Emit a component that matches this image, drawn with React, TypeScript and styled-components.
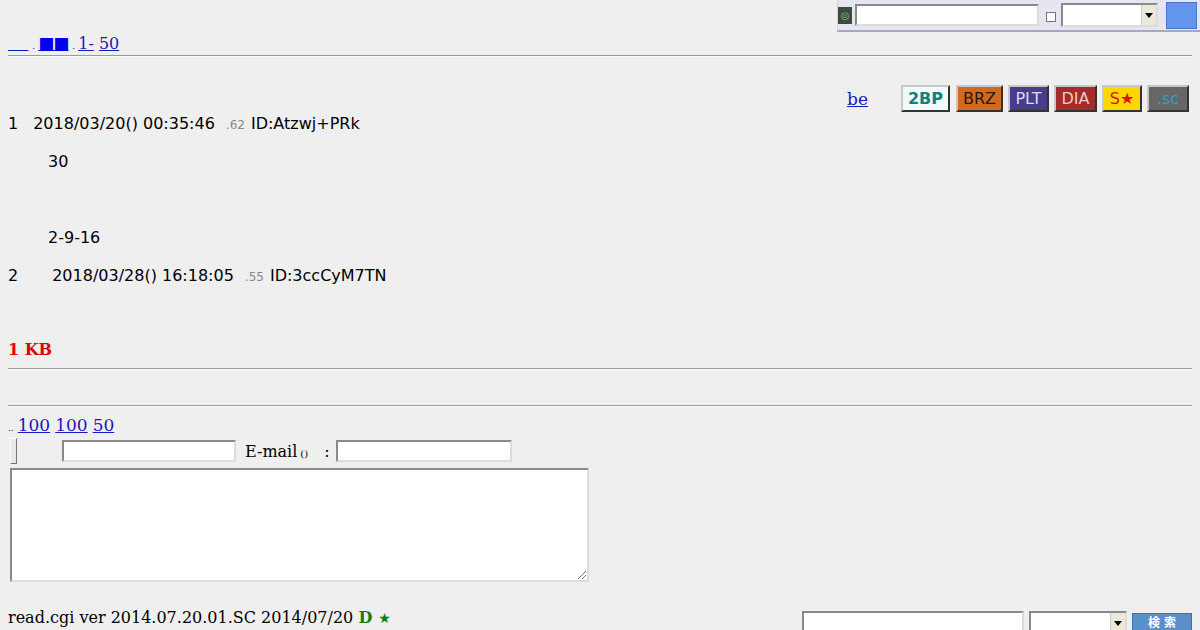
import { createGlobalStyle, styled } from "styled-components";

const Global = createGlobalStyle`
  html, body {
    background: #efefef;
  }
  body {
    margin: 8px;
    font-family: "DejaVu Serif", serif;
    font-size: 16px;
    color: #000;
  }
`;

const Page = styled.div`
  display: flex;
  flex-direction: column;
`;

const SearchBar = styled.form`
  position: fixed;
  top: 0;
  right: 0;
  width: 363px;
  height: 32px;
  background: #e6e6f3;
  border-left: 1px solid #d0d0e0;
  border-bottom: 2px solid #a8a8c4;
  display: flex;
  align-items: center;
  gap: 3px;
  box-sizing: border-box;
`;

const Emblem = styled.span`
  width: 14px;
  height: 17px;
  background: #3f4a3f;
  color: #7ec07e;
  font-size: 10px;
  font-family: "DejaVu Sans", sans-serif;
  display: flex;
  align-items: center;
  justify-content: center;
`;

const Field = styled.span<{ w: number; h: number }>`
  display: block;
  flex: none;
  width: ${(p) => p.w}px;
  height: ${(p) => p.h}px;
  background: #fff;
  border: 2px solid;
  border-color: #8a8a8a #dcdcdc #dcdcdc #8a8a8a;
  box-sizing: border-box;
`;

const Check = styled.span`
  width: 8px;
  height: 8px;
  border: 1px solid #777;
  background: #fff;
  margin: 4px 2px 0 4px;
`;

const Select = styled.span<{ w: number; h: number }>`
  display: flex;
  flex: none;
  justify-content: flex-end;
  align-items: stretch;
  width: ${(p) => p.w}px;
  height: ${(p) => p.h}px;
  background: #fff;
  border: 2px solid;
  border-color: #8a8a8a #dcdcdc #dcdcdc #8a8a8a;
  box-sizing: border-box;
`;

const Arrow = styled.span`
  width: 14px;
  background: #ece9d8;
  border-left: 1px solid #c8c8c8;
  display: flex;
  align-items: center;
  justify-content: center;
  &::after {
    content: "";
    border-left: 4px solid transparent;
    border-right: 4px solid transparent;
    border-top: 5px solid #000;
  }
`;

const BlueButton = styled.span`
  width: 31px;
  height: 27px;
  margin-left: 5px;
  background: #6495ed;
  border: 1px solid #4a76c8;
  box-sizing: border-box;
`;

const TopLinks = styled.div`
  margin-top: 25px;
  height: 20px;
  line-height: 20px;
  display: flex;
  align-items: baseline;
`;

const Link = styled.a`
  color: #1a1ab8;
  text-decoration: underline;
  white-space: pre;
`;

const Dot = styled.span`
  font-size: 9px;
  line-height: 9px;
  color: #1a1ab8;
  margin: 0 3px 0 4px;
`;

const Squares = styled.span`
  color: #0000ee;
  font-family: "DejaVu Sans", sans-serif;
  font-size: 17px;
  letter-spacing: -1px;
`;

const Rule = styled.hr<{ top: number }>`
  margin: ${(p) => p.top}px 0 0;
  height: 0;
  border: none;
  border-top: 1px solid #9a9a9a;
  border-bottom: 1px solid #fafafa;
`;

const Tools = styled.div`
  margin-top: 28px;
  display: flex;
  justify-content: flex-end;
  align-items: center;
  gap: 5px;
  padding-right: 3px;
  height: 27px;
`;

const BeLink = styled(Link)`
  font-size: 17px;
  margin-right: 28px;
`;

const Board = styled.span<{ bg: string; fg: string; w: number; bold?: boolean }>`
  width: ${(p) => p.w}px;
  height: 27px;
  box-sizing: border-box;
  background: ${(p) => p.bg};
  color: ${(p) => p.fg};
  font-family: "DejaVu Sans", sans-serif;
  font-size: 16px;
  font-weight: ${(p) => (p.bold ? 700 : 400)};
  display: flex;
  align-items: center;
  justify-content: center;
  border: 2px solid;
  border-color: #c8c8c8 #333 #333 #c8c8c8;
  margin-right: ${(p) => (p.bold ? 1 : 0)}px;
`;

const Posts = styled.dl`
  margin: 2px 0 0;
  font-family: "DejaVu Sans", sans-serif;
  font-size: 16px;
`;

const Head = styled.dt<{ top: number }>`
  margin-top: ${(p) => p.top}px;
  height: 20px;
  line-height: 20px;
  display: flex;
  align-items: baseline;
`;

const Num = styled.span<{ gap: number }>`
  margin-right: ${(p) => p.gap}px;
`;

const Host = styled.span`
  font-size: 12px;
  color: #888;
  margin: 0 6px 0 11px;
`;

const Body = styled.dd`
  margin: 9px 0 0 40px;
  line-height: 38px;
  white-space: pre;
`;

const Size = styled.div`
  margin-top: 54px;
  color: #e00000;
  font-weight: 700;
  font-size: 16px;
  line-height: 20px;
`;

const PageLinks = styled.div`
  margin-top: 8px;
  height: 20px;
  font-size: 17px;
  line-height: 20px;
  display: flex;
  align-items: baseline;
  gap: 5px;
`;

const Tiny = styled.span`
  font-size: 9px;
  line-height: 9px;
  color: #1a1ab8;
  margin-right: -1px;
`;

const FormRow = styled.div`
  margin-top: 3px;
  height: 26px;
  display: flex;
  align-items: center;
  padding-left: 2px;
  font-size: 16px;
`;

const Submit = styled.span`
  width: 7px;
  height: 26px;
  box-sizing: border-box;
  background: #e8e8e8;
  border: 1px solid;
  border-color: #fff #777 #777 #fff;
  margin-right: 45px;
  align-self: flex-start;
`;

const Label = styled.span`
  margin: 0 3px 0 9px;
`;

const Paren = styled.span`
  font-size: 10px;
  margin: 4px 16px 0 0;
`;

const Colon = styled.span`
  margin-right: 6px;
`;

const TextArea = styled.div`
  margin: 4px 0 0 2px;
  width: 579px;
  height: 114px;
  box-sizing: border-box;
  background: #fff;
  border: 2px solid;
  border-color: #8a8a8a #dcdcdc #dcdcdc #8a8a8a;
  position: relative;
  &::after {
    content: "";
    position: absolute;
    right: 1px;
    bottom: 1px;
    width: 8px;
    height: 8px;
    background: linear-gradient(135deg, transparent 45%, #777 45%, #777 55%, transparent 55%, transparent 70%, #777 70%, #777 80%, transparent 80%);
  }
`;

const Footer = styled.div`
  margin-top: 26px;
  display: flex;
  justify-content: space-between;
  align-items: flex-start;
`;

const Version = styled.div`
  font-size: 16px;
  line-height: 20px;
`;

const Green = styled.b`
  color: #108010;
`;

const Star = styled.span`
  color: #108010;
  font-family: "DejaVu Sans", sans-serif;
  font-size: 14px;
  margin-left: 6px;
`;

const FindForm = styled.div`
  display: flex;
  align-items: flex-start;
  gap: 5px;
  margin-top: 3px;
`;

const FindButton = styled.span`
  width: 60px;
  height: 18px;
  margin-top: 2px;
  background: #5a8fcc;
  border: 1px solid #3f6fa8;
  box-sizing: border-box;
  color: #fff;
  font-family: "Noto Sans CJK JP", sans-serif;
  font-size: 12px;
  line-height: 14px;
  font-weight: 700;
  letter-spacing: 4px;
  padding-left: 4px;
  display: flex;
  justify-content: center;
  align-items: center;
`;

const boards = [
  { t: "2BP", bg: "#f2f9fb", fg: "#0f8080", w: 49, bold: true },
  { t: "BRZ", bg: "#d2691e", fg: "#2a1a10", w: 47 },
  { t: "PLT", bg: "#483d8b", fg: "#dcdcf0", w: 41 },
  { t: "DIA", bg: "#a52a2a", fg: "#f0c8c8", w: 43 },
  { t: "S★", bg: "#ffd700", fg: "#e01010", w: 40 },
  { t: ".sc", bg: "#666666", fg: "#2aa0c8", w: 42 },
];

export default function App() {
  return (
    <Page>
      <Global />
      <SearchBar>
        <Emblem>◎</Emblem>
        <Field w={184} h={22} />
        <Check />
        <Select w={97} h={24}>
          <Arrow />
        </Select>
        <BlueButton />
      </SearchBar>

      <TopLinks>
        <Link href="#">{"    "}</Link>
        <Dot>.</Dot>
        <Link href="#">
          <Squares>■■</Squares>
        </Link>
        <Dot>.</Dot>
        <Link href="#">1-</Link>
        <span>&nbsp;</span>
        <Link href="#">50</Link>
      </TopLinks>
      <Rule top={2} />

      <Tools>
        <BeLink href="#">be</BeLink>
        {boards.map((b) => (
          <Board key={b.t} bg={b.bg} fg={b.fg} w={b.w} bold={b.bold}>
            {b.t}
          </Board>
        ))}
      </Tools>

      <Posts>
        <Head top={0}>
          <Num gap={15}>1</Num>
          2018/03/20() 00:35:46
          <Host>.62</Host>
          ID:Atzwj+PRk
        </Head>
        <Body>{"30\n\n2-9-16"}</Body>
        <Head top={9}>
          <Num gap={34}>2</Num>
          2018/03/28() 16:18:05
          <Host>.55</Host>
          ID:3ccCyM7TN
        </Head>
      </Posts>

      <Size>1 KB</Size>
      <Rule top={8} />
      <Rule top={35} />

      <PageLinks>
        <Tiny>..</Tiny>
        <Link href="#">100</Link>
        <Link href="#">100</Link>
        <Link href="#">50</Link>
      </PageLinks>

      <FormRow>
        <Submit />
        <Field w={174} h={22} />
        <Label>E-mail</Label>
        <Paren>()</Paren>
        <Colon>:</Colon>
        <Field w={176} h={22} />
      </FormRow>

      <TextArea />

      <Footer>
        <Version>
          read.cgi ver 2014.07.20.01.SC 2014/07/20 <Green>D</Green>
          <Star>★</Star>
        </Version>
        <FindForm>
          <Field w={222} h={24} />
          <Select w={98} h={24}>
            <Arrow />
          </Select>
          <FindButton>検索</FindButton>
        </FindForm>
      </Footer>
    </Page>
  );
}
